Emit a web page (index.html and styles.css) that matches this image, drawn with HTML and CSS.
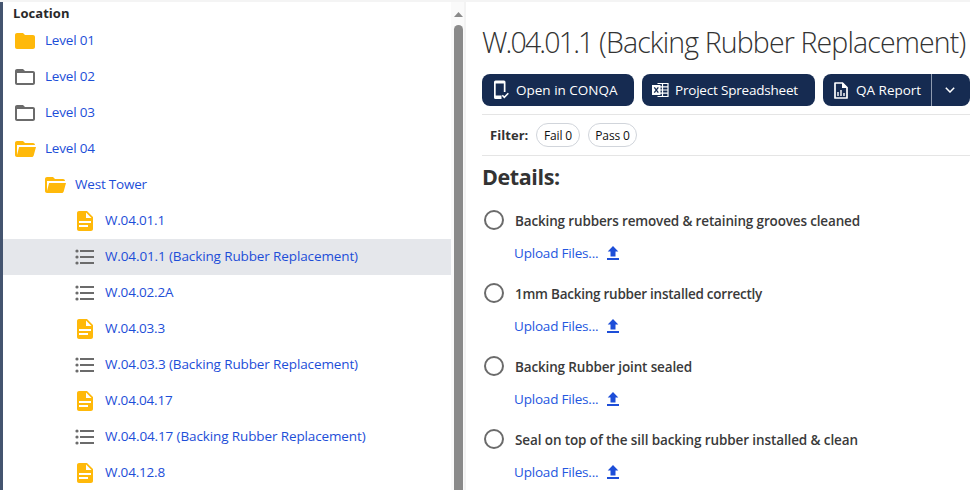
FILE: index.html
```html
<!DOCTYPE html>
<html lang="en">
<head>
<meta charset="utf-8">
<title>Location checklist</title>
<link rel="stylesheet" href="styles.css">
</head>
<body>
<svg class="defs" width="0" height="0">
  <symbol id="folder" viewBox="0 0 24 24"><path d="M10 4H4c-1.100 0-2 .9-2 2v12c0 1.100.9 2 2 2h16c1.100 0 2-.9 2-2V8c0-1.100-.9-2-2-2h-8l-2-2z"/></symbol>
  <symbol id="folder-empty" viewBox="0 0 24 24"><path d="M20 6h-8l-2-2H4c-1.100 0-2 .9-2 2v12c0 1.100.9 2 2 2h16c1.100 0 2-.9 2-2V8c0-1.100-.9-2-2-2zm0 12H4V8h16v10z"/></symbol>
  <symbol id="folder-open" viewBox="0 0 24 24"><path d="M4 20c-1.100 0-2-.9-2-2V6c0-1.100.9-2 2-2h6l2 2h8c1.100 0 2 .9 2 2H4v10l2.100-8H23l-2.300 8.500c-.25.900-.9 1.500-1.900 1.500H4z"/></symbol>
  <symbol id="doc" viewBox="0 0 24 24"><path d="M14 2H6c-1.100 0-2 .9-2 2v16c0 1.100.9 2 2 2h12c1.100 0 2-.9 2-2V8l-6-6zm1 16H6v-2h9v2zm3-4H6v-2h12v2zm-5-5V3.500L18.500 9H13z"/></symbol>
  <symbol id="list" viewBox="0 0 24 24"><circle cx="4" cy="6" r="1.600"/><circle cx="4" cy="12" r="1.600"/><circle cx="4" cy="18" r="1.600"/><path d="M7 5h14v2H7zM7 11h14v2H7zM7 17h14v2H7z"/></symbol>
  <symbol id="upload" viewBox="0 0 12 14"><path d="M6 0L11.300 5.500H8.500V10.500H3.500V5.500H.7zM0 12h12v2H0z"/></symbol>
</svg>
<div class="app">
  <nav class="sidebar">
    <div class="tree">
      <h2 class="tree-title">Location</h2>
      <a class="node"><svg class="icon amber"><use href="#folder"/></svg><span>Level 01</span></a>
      <a class="node"><svg class="icon"><use href="#folder-empty"/></svg><span>Level 02</span></a>
      <a class="node"><svg class="icon"><use href="#folder-empty"/></svg><span>Level 03</span></a>
      <a class="node"><svg class="icon amber"><use href="#folder-open"/></svg><span>Level 04</span></a>
      <a class="node depth-1"><svg class="icon amber"><use href="#folder-open"/></svg><span>West Tower</span></a>
      <a class="node depth-2"><svg class="icon amber"><use href="#doc"/></svg><span>W.04.01.1</span></a>
      <a class="node depth-2 long selected"><svg class="icon"><use href="#list"/></svg><span>W.04.01.1 (Backing Rubber Replacement)</span></a>
      <a class="node depth-2"><svg class="icon"><use href="#list"/></svg><span>W.04.02.2A</span></a>
      <a class="node depth-2"><svg class="icon amber"><use href="#doc"/></svg><span>W.04.03.3</span></a>
      <a class="node depth-2 long"><svg class="icon"><use href="#list"/></svg><span>W.04.03.3 (Backing Rubber Replacement)</span></a>
      <a class="node depth-2"><svg class="icon amber"><use href="#doc"/></svg><span>W.04.04.17</span></a>
      <a class="node depth-2 long"><svg class="icon"><use href="#list"/></svg><span>W.04.04.17 (Backing Rubber Replacement)</span></a>
      <a class="node depth-2"><svg class="icon amber"><use href="#doc"/></svg><span>W.04.12.8</span></a>
    </div>
    <div class="scrollbar">
      <svg class="scroll-arrow" viewBox="0 0 9 5"><path d="M4.500 0L9 5H0z"/></svg>
      <div class="thumb"></div>
    </div>
  </nav>
  <main class="content">
    <h1 class="title"><span class="code">W.04.01.1</span> (Backing Rubber Replacement)</h1>
    <div class="actions">
      <button class="btn open">
        <svg width="16" height="20" viewBox="0 0 16 20"><path fill="#fff" fill-rule="evenodd" d="M2.500 0.500h8.500a1.500 1.500 0 0 1 1.500 1.500V12h-1.700V3.500H2.700v12H8.500V19H2.500a1.500 1.500 0 0 1-1.500-1.500v-15.500A1.500 1.500 0 0 1 2.500.5z"/><path d="M9.300 15.300l2 2 4-4" fill="none" stroke="#fff" stroke-width="1.600"/></svg>
        <span>Open in CONQA</span>
      </button>
      <button class="btn sheet">
        <svg width="17" height="16" viewBox="0 0 17 16"><path d="M5.500 1.500H16v13H5.500M5.500 4.800H16M5.500 8H16M5.500 11.200H16M10.500 1.500v13" fill="none" stroke="#fff" stroke-width="1.200"/><path fill="#fff" d="M0 3h8.500v10H0z"/><path d="M2.300 5.300l4 5.400M6.300 5.300l-4 5.400" stroke="#162b51" stroke-width="1.300"/></svg>
        <span>Project Spreadsheet</span>
      </button>
      <button class="btn report">
        <svg width="14" height="17" viewBox="0 0 14 17"><path d="M1 1h7.500L13 5.500V16H1z" fill="none" stroke="#fff" stroke-width="1.700" stroke-linejoin="round"/><path d="M8 .5V6h5.500z" fill="#fff"/><path d="M4 10v4M7 8v6M10 11v3" stroke="#fff" stroke-width="1.400"/></svg>
        <span>QA Report</span>
      </button>
      <button class="btn more" aria-label="More">
        <svg width="10" height="6" viewBox="0 0 10 6"><path d="M.8.8L5 5 9.200.8" fill="none" stroke="#fff" stroke-width="1.500"/></svg>
      </button>
    </div>
    <div class="filter">
      <span class="filter-label">Filter:</span>
      <span class="chip fail">Fail 0</span>
      <span class="chip pass">Pass 0</span>
    </div>
    <section class="details">
      <h2 class="details-title">Details:</h2>
      <div class="item"><span class="radio"></span><span class="label">Backing rubbers removed &amp; retaining grooves cleaned</span><a class="upload"><span>Upload Files...</span><svg width="12" height="14"><use href="#upload"/></svg></a></div>
      <div class="item"><span class="radio"></span><span class="label tight">1mm Backing rubber installed correctly</span><a class="upload"><span>Upload Files...</span><svg width="12" height="14"><use href="#upload"/></svg></a></div>
      <div class="item"><span class="radio"></span><span class="label">Backing Rubber joint sealed</span><a class="upload"><span>Upload Files...</span><svg width="12" height="14"><use href="#upload"/></svg></a></div>
      <div class="item"><span class="radio"></span><span class="label loose">Seal on top of the sill backing rubber installed &amp; clean</span><a class="upload"><span>Upload Files...</span><svg width="12" height="14"><use href="#upload"/></svg></a></div>
    </section>
  </main>
</div>
</body>
</html>
```

FILE: styles.css
```css
* { box-sizing: border-box; }
body { margin: 0; overflow: hidden; font-family: "Open Sans", "Noto Sans", sans-serif; font-size: 13.5px; color: #333; background: #fff; }
h1, h2 { margin: 0; }
.defs { position: absolute; }
.app { display: flex; width: 970px; height: 490px; overflow: hidden; border-top: 2px solid #f4f4f4; }
.sidebar { display: flex; flex: none; width: 466px; border-left: 3px solid #44546f; }
.tree { width: 448px; flex: none; white-space: nowrap; }
.tree-title { height: 21px; padding-left: 10px; font-size: 13px; line-height: 22px; font-weight: 700; letter-spacing: 0.05px; color: #292929; }
.node { display: flex; align-items: center; height: 36px; padding-left: 10px; gap: 8px; color: #1d4ed8; letter-spacing: -0.2px; }
.node span { position: relative; top: -1px; }
.depth-1 { padding-left: 40px; }
.depth-2 { padding-left: 70px; }
.long { letter-spacing: -0.12px; }
.selected { background: #e5e7eb; }
.icon { width: 24px; height: 24px; flex: none; fill: #6b6b6b; }
.amber { fill: #ffb90a; }
.scrollbar { display: flex; flex-direction: column; align-items: center; width: 15px; padding: 10px 0 0 1px; background: #fafafa; border-right: 2px solid #f3f3f3; }
.scroll-arrow { width: 9px; height: 5px; fill: #8a8a8a; flex: none; }
.thumb { width: 9px; flex: 1; margin-top: 8px; background: #8a8a8a; border-radius: 5px 5px 0 0; }
.content { flex: 1; min-width: 0; padding-left: 16px; white-space: nowrap; }
.title { height: 72px; line-height: 81px; font-size: 28.5px; font-weight: 300; letter-spacing: -0.87px; color: #333; }
.title .code { letter-spacing: -1.85px; }
.actions { display: flex; height: 32px; }
.btn { display: flex; align-items: center; height: 32px; border: 0; border-radius: 8px; background: #162b51; color: #fff; font: inherit; padding: 0; letter-spacing: -0.2px; }
.btn svg { flex: none; }
.open { width: 152px; padding-left: 11px; gap: 7px; margin-right: 8px; letter-spacing: 0; }
.sheet { width: 173px; padding-left: 10px; gap: 6px; margin-right: 8px; }
.report { width: 108px; padding-left: 11px; gap: 8px; border-radius: 8px 0 0 8px; letter-spacing: 0; }
.more { width: 39px; padding-right: 2px; justify-content: center; border-left: 1px solid #8f9bb0; border-radius: 0 8px 8px 0; }
.filter { display: flex; align-items: center; height: 42px; margin-top: 8px; padding-left: 8px; border-top: 1px solid #e5e5e5; border-bottom: 1px solid #e5e5e5; }
.filter-label { width: 46px; font-weight: 700; font-size: 13px; letter-spacing: 0.05px; }
.chip { display: flex; align-items: center; justify-content: center; height: 24px; border: 1px solid #d1d5db; border-radius: 12px; font-size: 12px; font-weight: 500; letter-spacing: -0.15px; color: #111; }
.fail { width: 44px; margin-right: 8px; }
.pass { width: 49px; }
.details-title { height: 42px; line-height: 42px; font-size: 21.5px; font-weight: 700; letter-spacing: -0.4px; }
.item { display: grid; grid-template-columns: 20px 1fr; grid-template-rows: 44px 22px; height: 73px; padding-left: 2px; align-items: center; align-content: start; }
.radio { width: 20px; height: 20px; border: 2px solid #6b6b6b; border-radius: 50%; }
.label { padding-left: 11px; padding-top: 2px; font-weight: 600; font-size: 13.5px; letter-spacing: -0.15px; color: #3a3a3a; }
.tight { letter-spacing: -0.25px; }
.loose { letter-spacing: -0.11px; }
.upload { grid-column: 2; display: flex; align-items: center; padding-left: 10px; color: #2457e0; letter-spacing: -0.2px; }
.upload span { width: 93px; }
.upload svg { fill: #1d4ed8; }
```
